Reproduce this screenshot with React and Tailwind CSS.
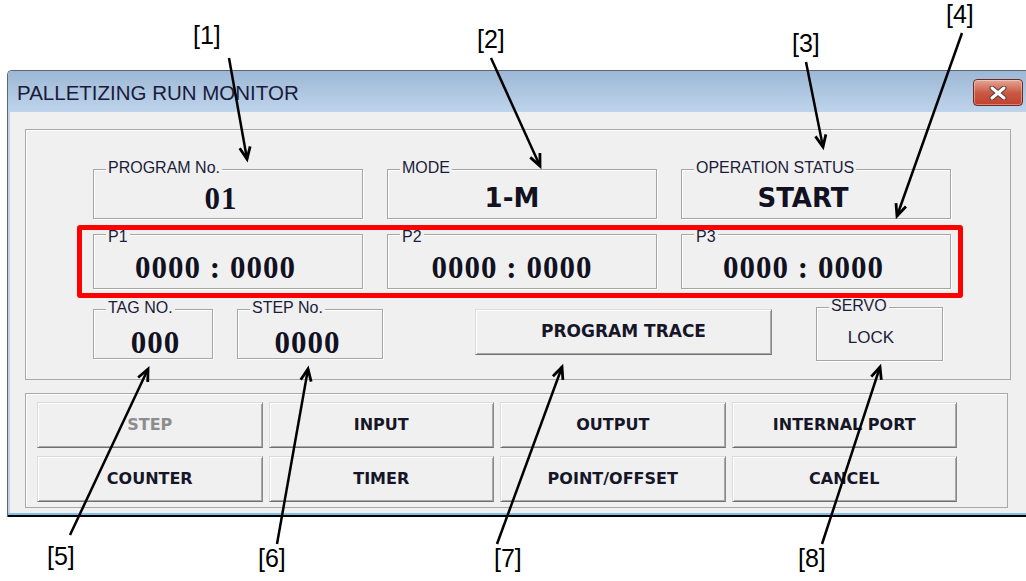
import React from "react";

// 팔레타이징 런 모니터 창 + 주석(번호, 화살표)
const labelCls = "text-[16px] leading-[18px] text-[#1c1c3a]";
const serifNum = "font-['Liberation_Serif',serif] font-bold text-[31px] leading-none tracking-[1px] text-[#111122]";
const sansBold = "font-['DejaVu_Sans',sans-serif] font-bold text-[26px] leading-none text-[#111122]";

function FieldBox({ label, className, labelTop = "-top-[11px]", children }) {
  return (
    <div className={`relative border border-[#a5a5a5] shadow-[inset_1px_1px_0_#fff,1px_1px_0_#fff] ${className}`}>
      <span className={`absolute left-[12px] ${labelTop} bg-[#f0f0f0] px-[2px] ${labelCls}`}>{label}</span>
      {children}
    </div>
  );
}

function WinButton({ children, disabled, className = "" }) {
  return (
    <div
      className={`flex items-center justify-center bg-[#f0f0f0] border border-t-[#dcdcdc] border-l-[#dcdcdc] border-b-[#707070] border-r-[#8a8a8a] shadow-[inset_1px_1px_0_#fff,inset_-1px_-1px_0_#a8a8a8] font-['DejaVu_Sans',sans-serif] font-bold text-[16px] ${
        disabled ? "text-[#8d8d8d]" : "text-[#161628]"
      } ${className}`}
    >
      {children}
    </div>
  );
}

function Arrow({ x1, y1, x2, y2 }) {
  const a = Math.atan2(y2 - y1, x2 - x1);
  const len = 13;
  const s = 0.42;
  const p1 = `${x2 - len * Math.cos(a - s)},${y2 - len * Math.sin(a - s)}`;
  const p2 = `${x2 - len * Math.cos(a + s)},${y2 - len * Math.sin(a + s)}`;
  return (
    <g>
      <line x1={x1} y1={y1} x2={x2} y2={y2} stroke="#000" strokeWidth="2.5" />
      <polyline points={`${p1} ${x2},${y2} ${p2}`} fill="none" stroke="#000" strokeWidth="2.8" strokeLinejoin="miter" />
    </g>
  );
}

const arrows = [
  [229, 58, 247, 159],
  [491, 58, 540, 166],
  [806, 62, 823, 147],
  [962, 33, 897, 216],
  [70, 535, 148, 369],
  [277, 544, 308, 369],
  [497, 544, 562, 367],
  [822, 544, 880, 367],
];

const marks = [
  { t: "[1]", x: 193, y: 23 },
  { t: "[2]", x: 477, y: 27 },
  { t: "[3]", x: 792, y: 31 },
  { t: "[4]", x: 946, y: 2 },
  { t: "[5]", x: 47, y: 544 },
  { t: "[6]", x: 258, y: 546 },
  { t: "[7]", x: 494, y: 546 },
  { t: "[8]", x: 798, y: 546 },
];

const buttons = [
  { t: "STEP", disabled: true },
  { t: "INPUT" },
  { t: "OUTPUT" },
  { t: "INTERNAL PORT" },
  { t: "COUNTER" },
  { t: "TIMER" },
  { t: "POINT/OFFSET" },
  { t: "CANCEL" },
];

export default function App() {
  return (
    <div className="relative w-[1026px] h-[581px] bg-white overflow-hidden font-['Liberation_Sans',sans-serif]">
      <div className="pt-[70px] pl-[7px]">
        {/* 창 */}
        <div className="w-[1019px] border-t border-l border-[#5c6670] rounded-tl-[5px]">
          {/* 타이틀 바 */}
          <div className="h-[41px] flex items-start bg-gradient-to-b from-[#9db8d6] to-[#bed4eb] rounded-tl-[4px]">
            <span className="pl-[9px] pt-[12px] text-[20.5px] leading-none text-[#1a1a3a]">PALLETIZING RUN MONITOR</span>
            <div className="ml-auto mr-[3px] mt-[8px] w-[50px] h-[27px] rounded-[4px] border border-[#6a2a2a] bg-gradient-to-b from-[#e6a595] via-[#c95a45] to-[#c2402c] shadow-[inset_0_0_0_1px_rgba(255,255,255,0.35)] flex items-center justify-center">
              <svg width="18" height="14" viewBox="0 0 18 14">
                <path d="M3 2 L15 12 M15 2 L3 12" stroke="#5a3a3a" strokeWidth="5" strokeLinecap="round" />
                <path d="M3 2 L15 12 M15 2 L3 12" stroke="#fff" strokeWidth="3" strokeLinecap="round" />
              </svg>
            </div>
          </div>

          {/* 본문 */}
          <div className="h-[401px] bg-[#f0f0f0] border-l-[2px] border-[#bfd4ea] pt-[17px] pl-[15px]">
            {/* 상단 그룹 */}
            <div className="w-[986px] h-[251px] border border-[#a8a8a8] shadow-[inset_1px_1px_0_#fff] pl-[67px] pt-[39px]">
              <div className="flex gap-[24px]">
                <FieldBox label="PROGRAM No." className="w-[270px] h-[50px]">
                  <div className={`pt-[13px] pr-[14px] text-center ${serifNum}`}>01</div>
                </FieldBox>
                <FieldBox label="MODE" className="w-[270px] h-[50px]">
                  <div className={`pt-[15px] pr-[20px] text-center ${sansBold}`}>1-M</div>
                </FieldBox>
                <FieldBox label="OPERATION STATUS" className="w-[270px] h-[50px]">
                  <div className={`pt-[15px] pr-[26px] text-center ${sansBold}`}>START</div>
                </FieldBox>
              </div>

              <div className="flex gap-[24px] mt-[15px]">
                {["P1", "P2", "P3"].map((p, i) => (
                  <FieldBox key={p} label={p} labelTop="-top-[7px]" className="w-[270px] h-[55px]">
                    <div className={`pt-[17px] text-center ${i === 1 ? "pr-[20px]" : "pr-[25px]"} ${serifNum}`}>0000 : 0000</div>
                  </FieldBox>
                ))}
              </div>

              <div className="flex items-start mt-[20px]">
                <FieldBox label="TAG NO." className="w-[120px] h-[50px]">
                  <div className={`pt-[17px] pl-[5px] text-center ${serifNum} text-[30px]`}>000</div>
                </FieldBox>
                <FieldBox label="STEP No." className="ml-[24px] w-[146px] h-[50px]">
                  <div className={`pt-[17px] pr-[5px] text-center ${serifNum} text-[30px]`}>0000</div>
                </FieldBox>
                <WinButton className="ml-[92px] w-[297px] h-[46px] text-[17px]">PROGRAM TRACE</WinButton>
                <FieldBox label="SERVO" className="ml-[44px] -mt-[2px] w-[127px] h-[54px]">
                  <div className="pt-[21px] pr-[17px] text-center text-[17px] leading-none text-[#1c1c3a]">LOCK</div>
                </FieldBox>
              </div>
            </div>

            {/* 하단 버튼 그룹 */}
            <div className="mt-[13px] w-[983px] h-[115px] border border-[#a8a8a8] shadow-[inset_1px_1px_0_#fff] pl-[11px] pt-[8px]">
              <div className="grid grid-cols-4 w-[920px] gap-x-[6px] gap-y-[8px]">
                {buttons.map((b) => (
                  <WinButton key={b.t} disabled={b.disabled} className="h-[46px]">
                    {b.t}
                  </WinButton>
                ))}
              </div>
            </div>
          </div>
          <div className="h-[2px] bg-[#86bfe6]" />
          <div className="h-[2px] bg-black" />
        </div>
      </div>

      {/* 주석: 빨간 테두리 */}
      <div className="absolute left-[77px] top-[225px] w-[886px] h-[73px] border-[5px] border-[#ff0000] rounded-[3px]" />

      {/* 주석: 화살표 */}
      <svg className="absolute left-0 top-0 pointer-events-none" width="1026" height="581">
        {arrows.map((a, i) => (
          <Arrow key={i} x1={a[0]} y1={a[1]} x2={a[2]} y2={a[3]} />
        ))}
      </svg>

      {/* 주석: 번호 */}
      {marks.map((m) => (
        <span
          key={m.t}
          className="absolute text-[25px] leading-none text-black"
          style={{ left: m.x, top: m.y }}
        >
          {m.t}
        </span>
      ))}
    </div>
  );
}
